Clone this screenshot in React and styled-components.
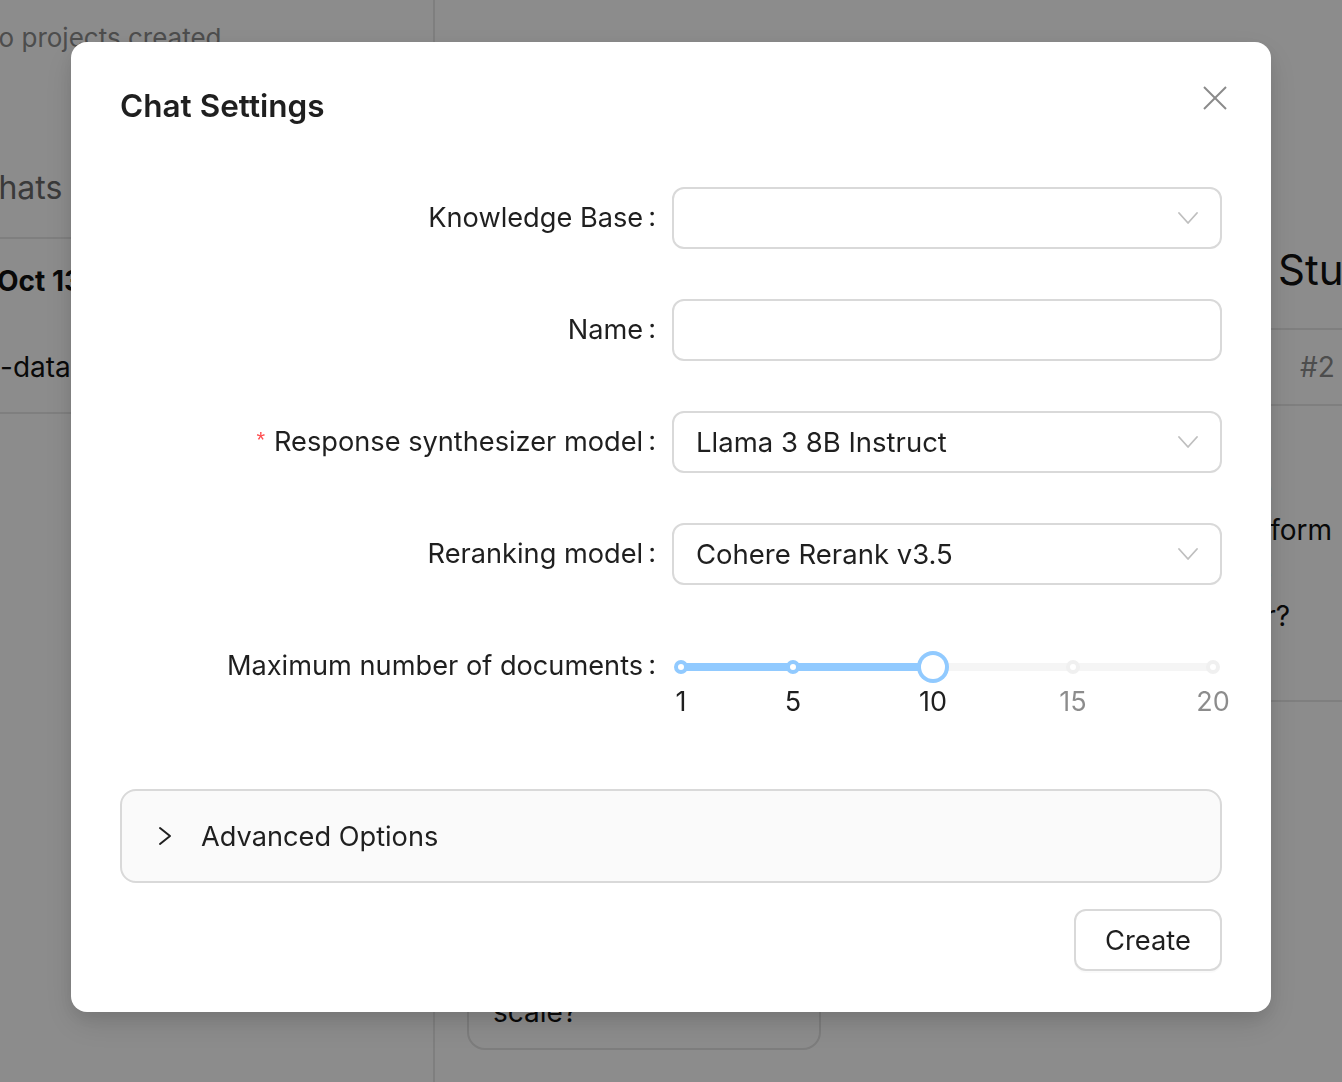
import React from "react";
import styled, { createGlobalStyle } from "styled-components";

const Global = createGlobalStyle`
  html, body { margin: 0; padding: 0; height: 100%; overflow: hidden; background: #fff; }
  body { font-family: Inter, "Noto Sans", "Liberation Sans", sans-serif; color: rgba(0,0,0,0.88); }
  #root { height: 100%; }
  * { box-sizing: border-box; }
`;

/* ---------- background page ---------- */
const Page = styled.div`
  height: 1082px;
  display: grid;
  grid-template-columns: 435px 820px 1fr;
  overflow: hidden;
`;

const Sidebar = styled.aside`
  border-right: 2px solid #e8e8e8;
  overflow: hidden;
  display: flex;
  flex-direction: column;
`;

const SideNote = styled.div`
  padding-top: 20px;
  height: 140px;
  font-size: 26px;
  line-height: 36px;
  color: #8c8c8c;
  white-space: nowrap;
  margin-left: ${(p) => p.$shift}px;
`;

const SideHeader = styled.div`
  height: 99px;
  display: flex;
  align-items: flex-end;
  padding-bottom: 31px;
  font-size: 32px;
  line-height: 36px;
  color: #6a6a6a;
  white-space: nowrap;
  border-bottom: 2px solid #e8e8e8;
  margin-left: ${(p) => p.$shift}px;
`;

const ChatItem = styled.div`
  height: 175px;
  border-bottom: 2px solid #e8e8e8;
  display: flex;
  flex-direction: column;
  padding-top: 24px;
  gap: 50px;
`;

const ChatLine = styled.div`
  font-size: 28px;
  line-height: 36px;
  white-space: nowrap;
  font-weight: ${(p) => (p.$bold ? 700 : 400)};
  color: #111;
  margin-left: ${(p) => p.$shift}px;
`;

const Center = styled.main`
  display: flex;
  flex-direction: column;
  justify-content: flex-end;
  padding: 0 0 32px 32px;
`;

const SuggestCard = styled.div`
  width: 354px;
  border: 2px solid #e3e3e3;
  border-radius: 18px;
  padding: 18px 24px 16px;
  font-size: 28px;
  line-height: 40px;
  color: #111;
`;

const RightPanel = styled.section`
  overflow: hidden;
  display: flex;
  flex-direction: column;
`;

const PanelTitle = styled.div`
  height: 330px;
  display: flex;
  align-items: flex-end;
  padding: 0 0 36px 23px;
  font-size: 42px;
  line-height: 44px;
  white-space: nowrap;
  color: #111;
  border-bottom: 2px solid #e8e8e8;
`;

const PanelTab = styled.div`
  height: 76px;
  display: flex;
  align-items: center;
  padding-left: 45px;
  font-size: 28px;
  color: #8c8c8c;
  border-bottom: 2px solid #e8e8e8;
  white-space: nowrap;
`;

const Questions = styled.div`
  height: 296px;
  padding-top: 60px;
  border-bottom: 2px solid #e8e8e8;
  width: 400px;
  margin-left: -313px;
`;

const QLine = styled.div`
  font-size: 28px;
  line-height: 43px;
  white-space: nowrap;
  text-align: right;
  color: #111;
  padding-right: ${(p) => p.$pad}px;
`;

/* ---------- modal ---------- */
const Overlay = styled.div`
  position: fixed;
  inset: 0;
  background: rgba(0, 0, 0, 0.45);
`;

const Modal = styled.div`
  position: fixed;
  top: 42px;
  left: 71px;
  width: 1200px;
  height: 970px;
  background: #fff;
  border-radius: 16px;
  padding: 44px 49px 41px;
  display: flex;
  flex-direction: column;
  box-shadow: 0 12px 32px rgba(0, 0, 0, 0.12), 0 6px 16px rgba(0, 0, 0, 0.08);
`;

const Title = styled.h2`
  margin: 0;
  font-size: 31.5px;
  line-height: 40px;
  font-weight: 600;
  color: rgba(0, 0, 0, 0.88);
`;

const CloseButton = styled.button`
  position: absolute;
  top: 44px;
  right: 44px;
  width: 24px;
  height: 24px;
  padding: 0;
  border: none;
  background: none;
  cursor: pointer;
  display: flex;
`;

const Form = styled.div`
  margin-top: 61px;
  display: flex;
  flex-direction: column;
`;

const Row = styled.div`
  display: grid;
  grid-template-columns: 552px 1fr;
  align-items: center;
  height: 62px;
  margin-bottom: ${(p) => p.$gap}px;
`;

const Label = styled.label`
  display: flex;
  justify-content: flex-end;
  align-items: center;
  font-size: 27.2px;
  line-height: 36px;
  color: rgba(0, 0, 0, 0.88);
  white-space: nowrap;
  &::after {
    content: ":";
    margin: 0 16px 0 5px;
    position: relative;
    top: -1px;
  }
`;

const Required = styled.span`
  color: #ff4d4f;
  font-size: 22px;
  font-family: "Liberation Sans", sans-serif;
  margin-right: 9px;
  position: relative;
  top: -2px;
`;

const Field = styled.div`
  height: 62px;
  border: 2px solid #d9d9d9;
  border-radius: 12px;
  padding: 0 22px 0 22px;
  display: flex;
  align-items: center;
  justify-content: space-between;
  font-size: 27.5px;
  color: rgba(0, 0, 0, 0.88);
  background: #fff;
`;

const SliderBox = styled.div`
  position: relative;
  height: 62px;
  margin: 0 9px;
`;

const Rail = styled.div`
  position: absolute;
  left: 0;
  right: 0;
  top: 28px;
  height: 8px;
  border-radius: 4px;
  background: #f5f5f5;
`;

const Track = styled.div`
  position: absolute;
  left: 0;
  top: 28px;
  height: 8px;
  border-radius: 4px;
  background: #91caff;
`;

const Dot = styled.span`
  position: absolute;
  top: 25px;
  width: 14px;
  height: 14px;
  margin-left: -7px;
  border-radius: 50%;
  background: #fff;
  border: 4px solid ${(p) => (p.$active ? "#91caff" : "#f0f0f0")};
`;

const Handle = styled.span`
  position: absolute;
  top: 20px;
  width: 24px;
  height: 24px;
  margin-left: -12px;
  border-radius: 50%;
  background: #fff;
  box-shadow: 0 0 0 4px #91caff;
`;

const Mark = styled.span`
  position: absolute;
  top: 52px;
  transform: translateX(-50%);
  font-size: 27px;
  line-height: 30px;
  color: ${(p) => (p.$active ? "rgba(0,0,0,0.88)" : "rgba(0,0,0,0.45)")};
`;

const Collapse = styled.div`
  height: 94px;
  border: 2px solid #d9d9d9;
  border-radius: 16px;
  background: #fafafa;
  display: flex;
  align-items: center;
  padding-left: 36px;
  gap: 29px;
  font-size: 27.2px;
  color: rgba(0, 0, 0, 0.88);
`;

const Footer = styled.div`
  margin-top: 26px;
  display: flex;
  justify-content: flex-end;
`;

const Button = styled.button`
  height: 62px;
  width: 148px;
  border: 2px solid #d9d9d9;
  border-radius: 12px;
  background: #fff;
  font-family: inherit;
  font-size: 27.3px;
  color: rgba(0, 0, 0, 0.88);
  box-shadow: 0 2px 0 rgba(0, 0, 0, 0.02);
  cursor: pointer;
`;

const ChevronDown = () => (
  <svg width="20" height="14" viewBox="0 0 20 14" fill="none">
    <polyline points="1,2 10,12 19,2" stroke="#bfbfbf" strokeWidth="1.8" strokeLinecap="round" strokeLinejoin="round" />
  </svg>
);

const ChevronRight = () => (
  <svg width="14" height="20" viewBox="0 0 14 20" fill="none">
    <polyline points="2,2 12,10 2,18" stroke="#1f1f1f" strokeWidth="2" strokeLinecap="round" strokeLinejoin="round" />
  </svg>
);

const CloseIcon = () => (
  <svg width="24" height="24" viewBox="0 0 24 24" fill="none">
    <line x1="1" y1="1" x2="23" y2="23" stroke="#8a8a8a" strokeWidth="2" />
    <line x1="23" y1="1" x2="1" y2="23" stroke="#8a8a8a" strokeWidth="2" />
  </svg>
);

const MIN = 1;
const MAX = 20;
const VALUE = 10;
const MARKS = [1, 5, 10, 15, 20];
const pct = (v) => ((v - MIN) / (MAX - MIN)) * 100;

function Slider() {
  return (
    <SliderBox>
      <Rail />
      <Track style={{ width: `${pct(VALUE)}%` }} />
      {MARKS.filter((m) => m !== VALUE).map((m) => (
        <Dot key={m} $active={m <= VALUE} style={{ left: `${pct(m)}%` }} />
      ))}
      <Handle style={{ left: `${pct(VALUE)}%` }} />
      {MARKS.map((m) => (
        <Mark key={m} $active={m <= VALUE} style={{ left: `${pct(m)}%` }}>
          {m}
        </Mark>
      ))}
    </SliderBox>
  );
}

export default function App() {
  return (
    <>
      <Global />
      <Page>
        <Sidebar>
          <SideNote $shift={-21}>No projects created</SideNote>
          <SideHeader $shift={-25}>Chats</SideHeader>
          <ChatItem>
            <ChatLine $bold $shift={-3}>Oct 13, 2024</ChatLine>
            <ChatLine $shift={0}>-data-pipeline</ChatLine>
          </ChatItem>
        </Sidebar>
        <Center>
          <SuggestCard>
            How does the retrieval
            <br />
            pipeline perform at
            <br />
            scale?
          </SuggestCard>
        </Center>
        <RightPanel>
          <PanelTitle>Study Notes</PanelTitle>
          <PanelTab>#2</PanelTab>
          <Questions>
            <QLine $pad={70}>What is the purpose</QLine>
            <QLine $pad={10}>of the data platform</QLine>
            <QLine $pad={70}>and how does it relate to</QLine>
            <QLine $pad={52}>which model is better?</QLine>
          </Questions>
        </RightPanel>
      </Page>

      <Overlay />
      <Modal role="dialog" aria-label="Chat Settings">
        <Title>Chat Settings</Title>
        <CloseButton aria-label="Close">
          <CloseIcon />
        </CloseButton>
        <Form>
          <Row $gap={50}>
            <Label>Knowledge Base</Label>
            <Field>
              <span />
              <ChevronDown />
            </Field>
          </Row>
          <Row $gap={50}>
            <Label>Name</Label>
            <Field />
          </Row>
          <Row $gap={50}>
            <Label>
              <Required>*</Required>Response synthesizer model
            </Label>
            <Field>
              <span>Llama 3 8B Instruct</span>
              <ChevronDown />
            </Field>
          </Row>
          <Row $gap={50}>
            <Label>Reranking model</Label>
            <Field>
              <span>Cohere Rerank v3.5</span>
              <ChevronDown />
            </Field>
          </Row>
          <Row $gap={92}>
            <Label>Maximum number of documents</Label>
            <Slider />
          </Row>
        </Form>
        <Collapse>
          <ChevronRight />
          <span>Advanced Options</span>
        </Collapse>
        <Footer>
          <Button>Create</Button>
        </Footer>
      </Modal>
    </>
  );
}
